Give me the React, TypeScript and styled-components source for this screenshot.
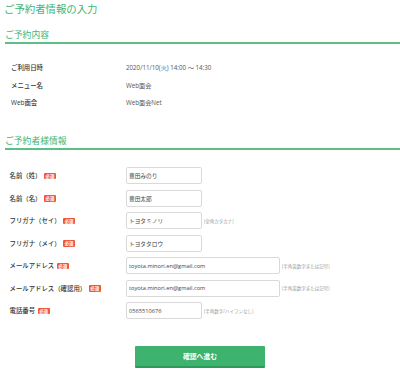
import React from "react";
import styled, { createGlobalStyle } from "styled-components";

const Global = createGlobalStyle`
  html, body { margin: 0; padding: 0; background: #fff; }
  body { font-family: "Open Sans", "Noto Sans CJK JP", sans-serif; color: #333; }
  * { box-sizing: border-box; }
`;

const Page = styled.div`
  width: 400px;
  padding: 2px 0 0 5px;
`;

const Title = styled.h1`
  margin: 0;
  margin-left: -1px;
  font-size: 10.4px;
  line-height: 14px;
  font-weight: 400;
  color: #3fb575;
`;

const SectionHeading = styled.h2<{ $top: number }>`
  margin: ${(p) => p.$top}px 0 0 0;
  padding: 0 0 1px 0;
  font-size: 8.8px;
  line-height: 12px;
  font-weight: 400;
  color: #3fb575;
  border-bottom: 2px solid #5dbf88;
`;

const InfoList = styled.dl`
  margin: 15px 0 0 0;
  padding: 0 0 0 6px;
`;

const InfoRow = styled.div`
  display: grid;
  grid-template-columns: 115px 1fr;
  height: 17.6px;
  align-items: center;
`;

const InfoLabel = styled.dt`
  font-size: 6.4px;
  font-weight: 500;
  color: #333;
`;

const InfoValue = styled.dd`
  margin: 0;
  font-size: 6.2px;
  color: #555;
`;

const Form = styled.div`
  margin-top: 17px;
  display: flex;
  flex-direction: column;
  gap: 5.5px;
  padding-left: 4.5px;
`;

const FormRow = styled.div`
  display: grid;
  grid-template-columns: 116.5px auto 1fr;
  align-items: center;
  height: 17px;
`;

const FormLabel = styled.div`
  display: flex;
  align-items: center;
  gap: 2.5px;
  font-size: 6.4px;
  font-weight: 500;
  color: #333;
  white-space: nowrap;
`;

const Badge = styled.span`
  display: inline-flex;
  align-items: center;
  justify-content: center;
  width: 12px;
  height: 6.5px;
  border-radius: 1px;
  background: #f0573a;
  color: #fff;
  font-size: 4.4px;
  font-weight: 700;
  line-height: 1;
`;

const Input = styled.div<{ $wide?: boolean }>`
  width: ${(p) => (p.$wide ? 154 : 76)}px;
  height: 17px;
  border: 1px solid #d9d9d9;
  border-radius: 2px;
  padding: 0 2px;
  display: flex;
  align-items: center;
  font-size: 5.7px;
  color: #444;
  white-space: nowrap;
  overflow: hidden;
`;

const Hint = styled.span`
  padding-left: 2px;
  font-size: 4.5px;
  color: #999;
  white-space: nowrap;
`;

const ButtonWrap = styled.div`
  margin-top: 26.7px;
  display: flex;
  padding-left: 130px;
`;

const Button = styled.button`
  width: 130px;
  height: 22px;
  border: none;
  border-radius: 1px;
  background: #3db36f;
  border-bottom: 2px solid #2d9a5a;
  color: #fff;
  font-family: "Open Sans", "Noto Sans CJK JP", sans-serif;
  font-size: 6.8px;
  font-weight: 700;
  padding: 0;
`;

const info = [
  ["ご利用日時", "2020/11/10(火) 14:00 ～ 14:30"],
  ["メニュー名", "Web面会"],
  ["Web面会", "Web面会Net"],
];

const fields: { label: string; value: string; wide?: boolean; hint?: string }[] = [
  { label: "名前（姓）", value: "豊田みのり" },
  { label: "名前（名）", value: "豊田太郎" },
  { label: "フリガナ（セイ）", value: "トヨタミノリ", hint: "(全角カタカナ)" },
  { label: "フリガナ（メイ）", value: "トヨタタロウ" },
  { label: "メールアドレス", value: "toyota.minori.en@gmail.com", wide: true, hint: "(半角英数字または記号)" },
  { label: "メールアドレス（確認用）", value: "toyota.minori.en@gmail.com", wide: true, hint: "(半角英数字または記号)" },
  { label: "電話番号", value: "0565510676", hint: "(半角数字/ハイフンなし)" },
];

export default function App() {
  return (
    <>
      <Global />
      <Page>
        <Title>ご予約者情報の入力</Title>
        <SectionHeading $top={13}>ご予約内容</SectionHeading>
        <InfoList>
          {info.map(([l, v]) => (
            <InfoRow key={l}>
              <InfoLabel>{l}</InfoLabel>
              <InfoValue>{v}</InfoValue>
            </InfoRow>
          ))}
        </InfoList>
        <SectionHeading $top={23.5}>ご予約者様情報</SectionHeading>
        <Form>
          {fields.map((f) => (
            <FormRow key={f.label}>
              <FormLabel>
                {f.label}
                <Badge>必須</Badge>
              </FormLabel>
              <Input $wide={f.wide}>{f.value}</Input>
              {f.hint ? <Hint>{f.hint}</Hint> : <span />}
            </FormRow>
          ))}
        </Form>
        <ButtonWrap>
          <Button>確認へ進む</Button>
        </ButtonWrap>
      </Page>
    </>
  );
}
